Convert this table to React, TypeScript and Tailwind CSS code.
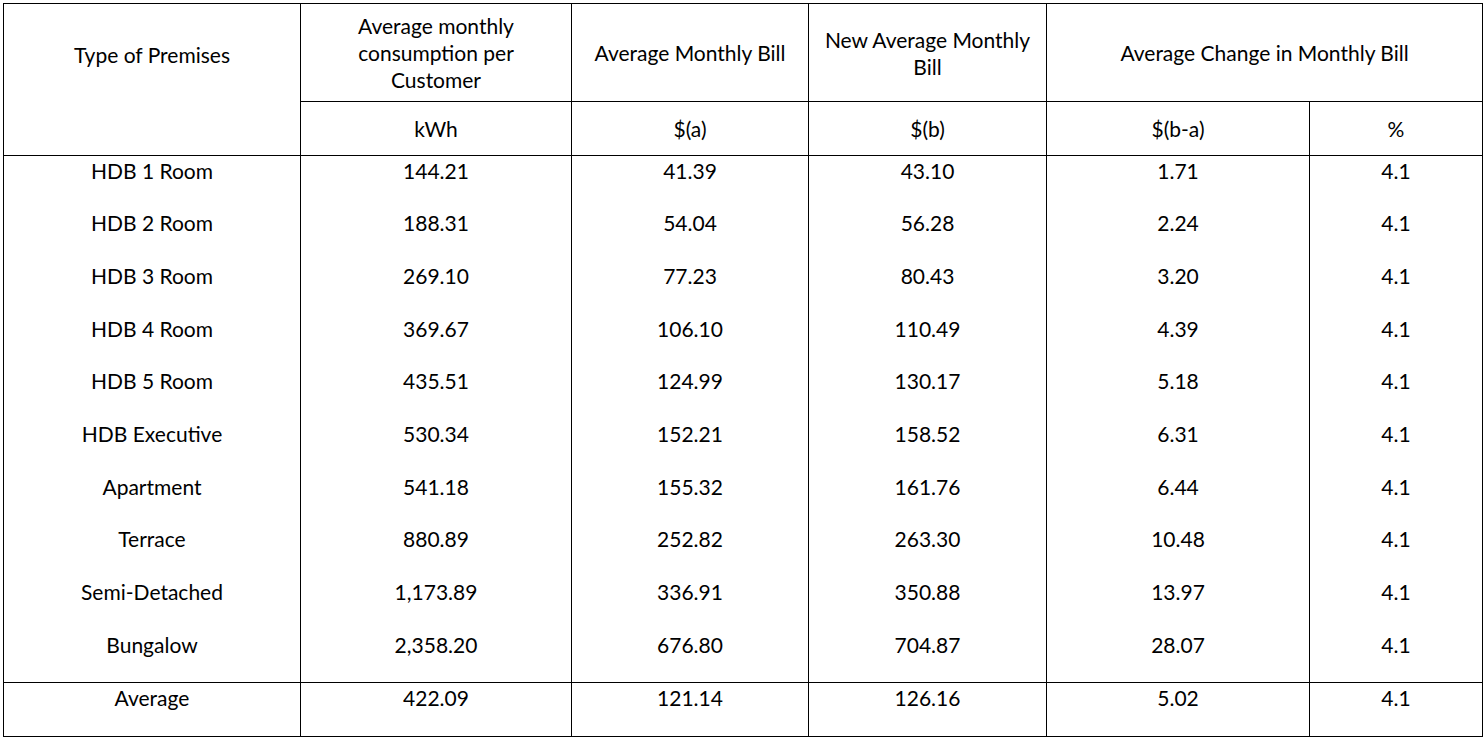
const rows: [string, string, string, string, string, string][] = [
  ["HDB 1 Room", "144.21", "41.39", "43.10", "1.71", "4.1"],
  ["HDB 2 Room", "188.31", "54.04", "56.28", "2.24", "4.1"],
  ["HDB 3 Room", "269.10", "77.23", "80.43", "3.20", "4.1"],
  ["HDB 4 Room", "369.67", "106.10", "110.49", "4.39", "4.1"],
  ["HDB 5 Room", "435.51", "124.99", "130.17", "5.18", "4.1"],
  ["HDB Executive", "530.34", "152.21", "158.52", "6.31", "4.1"],
  ["Apartment", "541.18", "155.32", "161.76", "6.44", "4.1"],
  ["Terrace", "880.89", "252.82", "263.30", "10.48", "4.1"],
  ["Semi-Detached", "1,173.89", "336.91", "350.88", "13.97", "4.1"],
  ["Bungalow", "2,358.20", "676.80", "704.87", "28.07", "4.1"],
]

const heights = ["h-[52px]", "h-[53px]", "h-[53px]", "h-[52px]", "h-[53px]", "h-[53px]", "h-[52px]", "h-[53px]", "h-[53px]", "h-[53px]"]

const cell = "border border-black text-center align-top pt-[1px] px-2"

export default function App() {
  return (
    <div className="min-h-screen bg-white pl-[3px] pt-[3px] text-black text-[21px] leading-[27px]" style={{ fontFamily: "Lato, 'Open Sans', sans-serif" }}>
      <table className="w-[1479px] border-collapse table-fixed">
        <colgroup>
          <col className="w-[297px]" />
          <col className="w-[271px]" />
          <col className="w-[237px]" />
          <col className="w-[238px]" />
          <col className="w-[263px]" />
          <col className="w-[173px]" />
        </colgroup>
        <thead>
          <tr className="h-[98px]">
            <th rowSpan={2} className="border border-black font-normal align-top pt-[37px]">Type of Premises</th>
            <th className="border border-black font-normal align-middle px-6">Average monthly consumption per Customer</th>
            <th className="border border-black font-normal align-middle">Average Monthly Bill</th>
            <th className="border border-black font-normal align-middle px-1">New Average Monthly Bill</th>
            <th colSpan={2} className="border border-black font-normal align-middle">Average Change in Monthly Bill</th>
          </tr>
          <tr className="h-[54px]">
            <th className="border border-black font-normal">kWh</th>
            <th className="border border-black font-normal">$(a)</th>
            <th className="border border-black font-normal">$(b)</th>
            <th className="border border-black font-normal">$(b-a)</th>
            <th className="border border-black font-normal">%</th>
          </tr>
        </thead>
        <tbody>
          {rows.map((r, i) => (
            <tr key={r[0]} className={heights[i]}>
              {r.map((v, j) => (
                <td key={j} className={`border-x border-black text-center align-top pt-[1px] px-2 ${i === 0 ? "border-t" : ""}`}>
                  {v}
                </td>
              ))}
            </tr>
          ))}
          <tr className="h-[54px]">
            {["Average", "422.09", "121.14", "126.16", "5.02", "4.1"].map((v, j) => (
              <td key={j} className={cell}>{v}</td>
            ))}
          </tr>
        </tbody>
      </table>
    </div>
  )
}
